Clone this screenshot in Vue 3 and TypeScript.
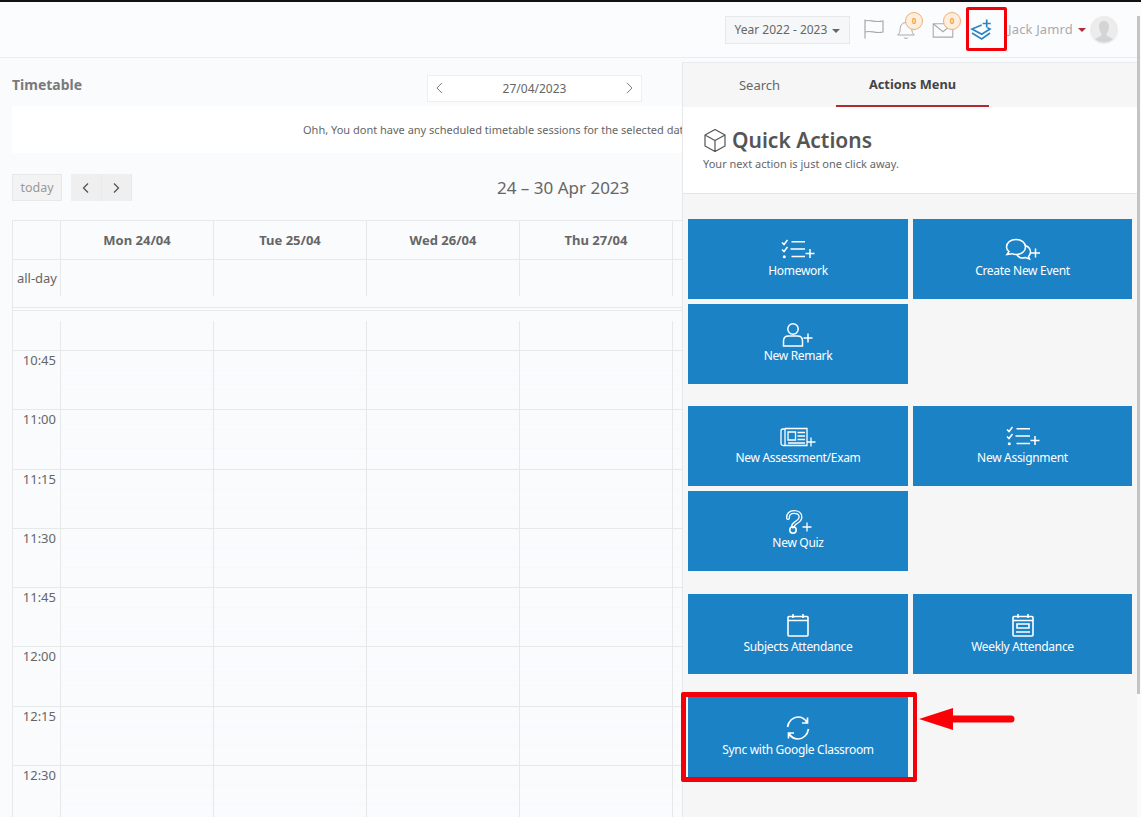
<script setup lang="ts">
const days = ['Mon 24/04', 'Tue 25/04', 'Wed 26/04', 'Thu 27/04', '']
const times = ['10:45', '11:00', '11:15', '11:30', '11:45', '12:00', '12:15', '12:30']
</script>

<template>
  <div class="page">
    <header class="topbar">
      <button class="year">Year 2022 - 2023 <span class="caret"></span></button>
      <svg class="ico flag" viewBox="0 0 22 20" fill="none" stroke="#a9a9a9" stroke-width="1.2">
        <path d="M2 .5v19M2 2c5-2 8 2 18 0v11c-8 2-12-2-18 0" />
      </svg>
      <span class="notif">
        <svg class="ico bell" viewBox="0 0 24 24" fill="none" stroke="#a9a9a9" stroke-width="1.2">
          <path d="M2 18c2-2 3-3 3-8a7 7 0 0 1 14 0c0 5 1 6 3 8zM9.5 21c1 1.5 4 1.500 5 0" />
        </svg>
        <span class="badge bell-badge">0</span>
      </span>
      <span class="notif">
        <svg class="ico mail" viewBox="0 0 24 18" fill="none" stroke="#a9a9a9" stroke-width="1.2">
          <path d="M1 2h22v15H1zM1 2l11 9 11-9" />
        </svg>
        <span class="badge mail-badge">0</span>
      </span>
      <svg class="ico layers" viewBox="0 0 22 22" fill="none" stroke="#2a85c5" stroke-width="1.700">
        <path d="M11.700 6L2 10l9.700 5.300L20 10l-2.500-1.300M2 14l9.700 6L20 14M16.700 .5v8M12.700 4.500h8" />
      </svg>
      <span class="user">Jack Jamrd</span>
      <span class="user-caret"></span>
      <span class="avatar">
        <svg viewBox="0 0 28 28">
          <circle cx="14" cy="14" r="14" fill="#ececec" />
          <path d="M14 5c3.500 0 5 2.500 5 5.500 0 3-1.500 6-2.500 7v2l6.500 3.500a14 14 0 0 1-18 0l6.500-3.500v-2c-1-1-2.500-4-2.500-7C9 7.500 10.500 5 14 5z" fill="#d4d4d4" />
        </svg>
      </span>
    </header>

    <div class="content">
      <main class="main">
        <div class="title-row">
          <h2 class="title">Timetable</h2>
          <div class="picker">
            <svg viewBox="0 0 8 14" fill="none" stroke="#666" stroke-width="1"><path d="M7 1L1 7l6 6" /></svg>
            <span>27/04/2023</span>
            <svg viewBox="0 0 8 14" fill="none" stroke="#666" stroke-width="1"><path d="M1 1l6 6-6 6" /></svg>
          </div>
        </div>
        <div class="message">Ohh, You dont have any scheduled timetable sessions for the selected date</div>
        <div class="toolbar">
          <button class="today">today</button>
          <div class="arrows">
            <button><svg viewBox="0 0 8 12" fill="none" stroke="#555" stroke-width="1.300"><path d="M6 1.500L1.500 6 6 10.500" /></svg></button>
            <button><svg viewBox="0 0 8 12" fill="none" stroke="#555" stroke-width="1.300"><path d="M2 1.500L6.500 6 2 10.500" /></svg></button>
          </div>
          <h3 class="range">24 – 30 Apr 2023</h3>
        </div>
        <div class="calendar">
          <div class="cal-row head">
            <div class="axis"></div>
            <div v-for="d in days" :key="d" class="cell">{{ d }}</div>
          </div>
          <div class="cal-row allday">
            <div class="axis">all-day</div>
            <div v-for="d in days" :key="d" class="cell"></div>
          </div>
          <div class="divider"></div>
          <div class="cal-row first">
            <div class="axis"></div>
            <div v-for="d in days" :key="d" class="cell"></div>
          </div>
          <div v-for="t in times" :key="t" class="cal-row slot">
            <div class="axis"><span>{{ t }}</span></div>
            <div v-for="d in days" :key="d" class="cell"></div>
          </div>
        </div>
      </main>

      <aside class="panel">
        <nav class="tabs">
          <a class="tab">Search</a>
          <a class="tab active">Actions Menu</a>
        </nav>
        <div class="panel-head">
          <h1>
            <svg viewBox="0 0 24 24" fill="none" stroke="#555" stroke-width="1.200" stroke-linejoin="round">
              <path d="M12 1.500l10 5.500v11l-10 5.500L2 18V7zM2 7l10 5.500L22 7M12 12.500v11" />
            </svg>
            Quick Actions
          </h1>
          <p>Your next action is just one click away.</p>
        </div>
        <div class="actions">
          <div class="group">
            <a class="action">
              <svg viewBox="0 0 36 24" fill="none" stroke="#fff" stroke-width="1.500">
                <path d="M2 4.500l2 2 3.500-4.500M2 11.500l2 2 3.500-4.500M11.500 3.700H25M10.500 11H25M11.500 18.500H25M30 11v9M25.500 15.500h9" />
                <circle cx="4.300" cy="18.700" r="1.500" fill="#fff" stroke="none" />
              </svg>
              Homework
            </a>
            <a class="action">
              <svg viewBox="0 0 36 24" fill="none" stroke="#fff" stroke-width="1.500">
                <path d="M11 1.500c5.500 0 9.500 3 9.500 7.500s-4 7.500-9.500 7.500c-1.500 0-3-.3-4-.8L2 16.500l2-3C2.500 12.500 1.500 10.800 1.500 9c0-4.500 4-7.500 9.500-7.500zM20 7.500c3.500 1 5.500 3.500 5.500 6.500 0 1.800-.8 3.300-2 4.500l1 2.500-4-1.500c-3 1-6.500.2-8.500-2.500M30.500 10.500v9M26 15h9" />
              </svg>
              Create New Event
            </a>
            <a class="action">
              <svg viewBox="0 0 36 24" fill="none" stroke="#fff" stroke-width="1.500">
                <circle cx="13" cy="6" r="5.200" />
                <path d="M3.500 23v-5c0-3 2-5 5-5h9c3 0 5 2 5 5v5zM28 10.500v9M23.500 15h9" />
              </svg>
              New Remark
            </a>
          </div>
          <div class="group">
            <a class="action">
              <svg viewBox="0 0 36 24" fill="none" stroke="#fff" stroke-width="1.300">
                <path d="M5 4v16.500H3c-1 0-2-1-2-2V6c0-1 .8-2 2-2h2M5 3.500h22v17H5M8 7h7.500v8H8zM17.500 7.500H25M17.500 11H25M17.500 14.500H25M8 18h17M31 12.500v9M26.500 17h9" />
              </svg>
              New Assessment/Exam
            </a>
            <a class="action">
              <svg viewBox="0 0 36 24" fill="none" stroke="#fff" stroke-width="1.500">
                <path d="M2 4.500l2 2 3.500-4.500M2 11.500l2 2 3.500-4.500M11.500 3.700H25M10.500 11H25M11.500 18.500H25M30 11v9M25.500 15.500h9" />
                <circle cx="4.300" cy="18.700" r="1.500" fill="#fff" stroke="none" />
              </svg>
              New Assignment
            </a>
            <a class="action">
              <svg viewBox="0 0 36 24" fill="none">
                <path d="M8 8c-.5-3.500 2-6 6-6s6.500 2 6.500 5c0 3.500-3 4.500-5 6-1.500 1-2.500 2-2.500 3.500" stroke="#fff" stroke-width="4" stroke-linecap="round" />
                <path d="M8 8c-.5-3.500 2-6 6-6s6.500 2 6.500 5c0 3.500-3 4.500-5 6-1.500 1-2.500 2-2.500 3.500" stroke="#1c82c6" stroke-width="1.400" stroke-linecap="round" />
                <circle cx="13" cy="20" r="3.200" stroke="#fff" stroke-width="1.600" />
                <path d="M27 12.500v9M22.500 17h9" stroke="#fff" stroke-width="1.300" />
              </svg>
              New Quiz
            </a>
          </div>
          <div class="group">
            <a class="action">
              <svg class="square" viewBox="0 0 24 24" fill="none" stroke="#fff" stroke-width="1.600">
                <path d="M3 3.500h18a1 1 0 0 1 1 1V22a1 1 0 0 1-1 1H3a1 1 0 0 1-1-1V4.500a1 1 0 0 1 1-1zM2 7.500h20M7 1v4M17 1v4" />
              </svg>
              Subjects Attendance
            </a>
            <a class="action">
              <svg class="square" viewBox="0 0 24 24" fill="none" stroke="#fff" stroke-width="1.600">
                <path d="M3 3.500h18a1 1 0 0 1 1 1V22a1 1 0 0 1-1 1H3a1 1 0 0 1-1-1V4.500a1 1 0 0 1 1-1zM2 7.500h20M7 1v4M17 1v4M6 11h12v4H6zM5 19h14" />
              </svg>
              Weekly Attendance
            </a>
          </div>
          <div class="group">
            <a class="action">
              <svg class="square" viewBox="0 0 24 24" fill="none" stroke="#fff" stroke-width="1.700">
                <path d="M1.500 11C2.500 5 7 1 12 1c4 0 7 2 9 5.500M21.500 1.500v5.500H16M22.500 13c-1 6-5.500 10-10.500 10-4 0-7-2-9-5.500M2.500 22.500V17H8" />
              </svg>
              Sync with Google Classroom
            </a>
          </div>
        </div>
      </aside>
    </div>

    <div class="scrollbar"></div>
    <div class="mark mark-top"></div>
    <div class="mark mark-sync"></div>
    <svg class="arrow" viewBox="0 0 96 22">
      <path d="M0 11L34 0v7.500h58a3.500 3.500 0 0 1 0 7H34V22z" fill="#fb0007" />
    </svg>
  </div>
</template>

<style scoped>
.page {
  position: relative;
  width: 1141px;
  height: 817px;
  overflow: hidden;
  border-top: 2px solid #111;
  box-sizing: border-box;
  background: #f9fbfd;
  font-family: "Noto Sans", "Open Sans", sans-serif;
  color: #555;
}
.topbar {
  height: 56px;
  box-sizing: border-box;
  border-bottom: 1px solid #e9ebee;
  background: #fbfcfe;
  display: flex;
  align-items: center;
  padding-left: 725px;
}
.year {
  width: 125px;
  height: 28px;
  border: 1px solid #e6e8ea;
  background: #f6f7f8;
  font: 12px "Noto Sans", sans-serif;
  color: #666;
  padding: 0;
}
.caret {
  display: inline-block;
  margin-left: 2px;
  vertical-align: middle;
  border-left: 4px solid transparent;
  border-right: 4px solid transparent;
  border-top: 4px solid #666;
}
.ico { display: block; flex: none; }
.flag { width: 22px; height: 20px; margin: -2px 0 0 13px; }
.notif { position: relative; display: block; flex: none; }
.bell { width: 20px; height: 22px; margin: 0 0 0 11px; }
.mail { width: 22px; height: 16px; margin: 0 0 0 16px; }
.badge {
  position: absolute;
  width: 18px;
  height: 18px;
  box-sizing: border-box;
  border-radius: 50%;
  border: 1px solid #f0b070;
  background: #fdeedd;
  color: #eda457;
  font-size: 8px;
  font-weight: 700;
  line-height: 16px;
  text-align: center;
}
.bell-badge { left: 20px; top: -7px; }
.mail-badge { left: 27px; top: -10px; }
.layers { width: 22px; height: 22px; margin: 0 0 0 16px; }
.user { margin: -2px 0 0 16px; font-size: 13px; color: #aaa; letter-spacing: 0.15px; white-space: nowrap; }
.user-caret {
  margin: 0 0 0 5px;
  border-left: 4px solid transparent;
  border-right: 4px solid transparent;
  border-top: 4px solid #b02a30;
}
.avatar { width: 28px; height: 28px; margin: 0 0 0 4px; }
.avatar svg { display: block; width: 28px; height: 28px; }

.content { display: flex; height: 759px; }
.main { width: 682px; flex: none; overflow: hidden; padding-left: 12px; box-sizing: border-box; }
.title-row { display: flex; align-items: center; height: 48px; }
.title { margin: 4px 0 0; font-size: 14px; font-weight: 700; color: #7a7a7a; width: 415px; }
.picker {
  width: 215px;
  height: 27px;
  box-sizing: border-box;
  display: flex;
  align-items: center;
  justify-content: space-between;
  padding: 0 8px;
  background: #fff;
  border: 1px solid #eceef0;
  font-size: 12px;
  color: #666;
  margin-top: 12px;
}
.picker svg { width: 7px; height: 12px; }
.message {
  height: 47px;
  background: #fff;
  width: 1000px;
  padding-left: 291px;
  box-sizing: border-box;
  font-size: 11px;
  line-height: 47px;
  color: #666;
  white-space: nowrap;
}
.toolbar { display: flex; align-items: center; height: 27px; margin-top: 21px; }
.today {
  width: 50px;
  height: 27px;
  border: 1px solid #e8e8e8;
  background: #f3f3f3;
  color: #999;
  font: 12.500px "Noto Sans", sans-serif;
  padding: 0;
}
.arrows { display: flex; margin-left: 9px; }
.arrows button {
  width: 30.500px;
  height: 27px;
  border: 0;
  border-right: 1px solid #e9e9e9;
  background: #efefef;
  padding: 0;
  display: flex;
  align-items: center;
  justify-content: center;
}
.arrows svg { width: 8px; height: 12px; }
.range { margin: 0 0 0 365px; font-size: 17px; font-weight: 400; color: #666; white-space: nowrap; }
.calendar { margin-top: 19px; width: 700px; border-top: 1px solid #e6e8ea; border-left: 1px solid #e6e8ea; }
.cal-row { display: grid; grid-template-columns: 48px repeat(4, 153px) 1fr; }
.cell, .axis { border-right: 1px solid #e6e8ea; box-sizing: border-box; }
.head { height: 38px; border-bottom: 1px solid #e6e8ea; }
.head .cell { text-align: center; line-height: 38px; font-size: 13px; font-weight: 700; color: #666; }
.allday { height: 36px; }
.allday .axis { font-size: 13px; text-align: right; padding-right: 3px; line-height: 36px; color: #666; }
.divider { height: 2px; margin-top: 11px; border-top: 1px solid #e6e8ea; border-bottom: 1px solid #e6e8ea; }
.first { height: 30px; margin-top: 10px; border-bottom: 1px solid #e6e8ea; box-sizing: border-box; }
.slot { height: 59.300px; border-bottom: 1px solid #e6e8ea; box-sizing: border-box; }
.slot .axis { font-size: 13px; text-align: right; padding: 0 4px 0 0; color: #666; }
.slot .cell {
  background:
    linear-gradient(#f7f8fb, #f7f8fb) 0 33% / 100% 1px no-repeat,
    linear-gradient(#f7f8fb, #f7f8fb) 0 66% / 100% 1px no-repeat;
}

.panel { width: 455px; flex: none; background: #f6f6f7; border-left: 1px solid #e6e8ea; border-top: 1px solid #e9ebee; box-sizing: border-box; margin-top: 4px; display: flex; flex-direction: column; }
.tabs { display: flex; height: 44px; background: #f6f6f6; }
.tab { width: 153px; text-align: center; line-height: 44px; font-size: 13px; color: #666; box-sizing: border-box; }
.tab.active { font-weight: 700; font-size: 12.800px; color: #444; border-bottom: 2px solid #b02a30; line-height: 43px; }
.panel-head { height: 87px; background: #fff; border-bottom: 1px solid #e4e4e4; box-sizing: border-box; padding: 19px 0 0 20px; }
.panel-head h1 { margin: 0; display: flex; align-items: center; gap: 5px; font-size: 21px; font-weight: 600; color: #555; line-height: 28px; }
.panel-head h1 svg { width: 24px; height: 24px; }
.panel-head p { margin: 2px 0 0; font-size: 11px; color: #666; }
.actions { padding: 25px 0 0 5px; display: flex; flex-direction: column; gap: 22px; }
.group { display: grid; grid-template-columns: 220px 219px; gap: 5px; }
.group:nth-child(n+3) { margin-top: 1px; }
.action {
  height: 80px;
  background: #1c82c6;
  color: #fff;
  font-size: 12px;
  display: flex;
  flex-direction: column;
  align-items: center;
  padding-top: 19px;
  box-sizing: border-box;
  line-height: 16px;
  letter-spacing: -0.3px;
  white-space: nowrap;
}
.action svg { width: 36px; height: 24px; margin-bottom: 1px; }
.action svg.square { width: 24px; height: 24px; margin-bottom: 2px; }

.scrollbar { position: absolute; left: 1137px; top: 14px; width: 3px; height: 678px; background: #c4c4c4; }
.mark { position: absolute; box-sizing: border-box; border-style: solid; border-color: #f40008; border-radius: 2px; }
.mark-top { left: 966px; top: 5px; width: 41px; height: 44px; border-width: 3px; }
.mark-sync { left: 681px; top: 690px; width: 236px; height: 90px; border-width: 5px 4px 5px 5px; }
.arrow { position: absolute; left: 919px; top: 706px; width: 96px; height: 22px; }
</style>

<style>
html, body { margin: 0; background: #f9fbfd; }
</style>
